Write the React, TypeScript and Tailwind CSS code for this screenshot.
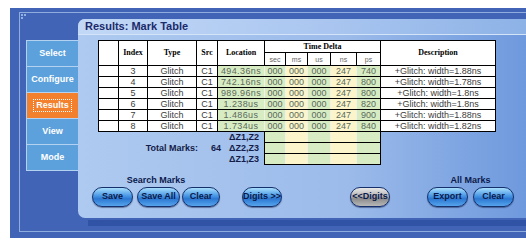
import React from 'react'

const rows = [
  { idx: 3, loc: '494.36ns', ns: '247', ps: '740', desc: '+Glitch: width=1.88ns' },
  { idx: 4, loc: '742.16ns', ns: '247', ps: '800', desc: '+Glitch: width=1.78ns' },
  { idx: 5, loc: '989.96ns', ns: '247', ps: '800', desc: '+Glitch: width=1.8ns' },
  { idx: 6, loc: '1.238us', ns: '247', ps: '820', desc: '+Glitch: width=1.8ns' },
  { idx: 7, loc: '1.486us', ns: '247', ps: '900', desc: '+Glitch: width=1.88ns' },
  { idx: 8, loc: '1.734us', ns: '247', ps: '840', desc: '+Glitch: width=1.82ns' },
]

const timeBg = ['bg-[#d8ecc4]', 'bg-[#fcf5cc]', 'bg-[#d8ecc4]', 'bg-[#fcf5cc]', 'bg-[#d8ecc4]']
const timeEdge = [
  'border-l-black border-r-[#f2f2e4]',
  'border-x-[#f2f2e4]',
  'border-x-[#f2f2e4]',
  'border-x-[#f2f2e4]',
  'border-l-[#f2f2e4] border-r-black',
]

const PillButton = ({ label, w, gray }: { label: string; w: string; gray?: boolean }) => (
  <div
    className={`h-[20px] ${w} rounded-full border border-[#16306c] flex items-center justify-center text-[9px] font-bold text-[#0b1a4c] shadow-[0_1px_1px_rgba(10,20,60,0.45)] ${
      gray
        ? 'bg-[linear-gradient(to_bottom,#e8e8e8_0%,#b4b4b4_45%,#8c8c8c_60%,#b8b8b8_100%)]'
        : 'bg-[linear-gradient(to_bottom,#a8defc_0%,#4c9ae6_42%,#2c78d2_60%,#55a4ec_100%)]'
    }`}
  >
    {label}
  </div>
)

const App = () => {
  return (
    <div className="w-[526px] h-[244px] bg-white pt-[8px] pl-[10px] font-['Liberation_Sans',Arial,sans-serif]">
      <div className="w-[516px] h-[230px] bg-[#4164b6] pt-[4px] pl-[9px]">
        <div className="relative h-[220px] border-l border-t border-b border-[#8eacde] flex pt-[6px]">
          {/* grip */}
          <div className="absolute left-[1px] top-[1px] w-[6px] h-[6px]">
            <div className="absolute left-0 top-0 w-[2px] h-[2px] bg-[#90b0e2]" />
            <div className="absolute left-[3px] top-0 w-[2px] h-[2px] bg-[#90b0e2]" />
            <div className="absolute left-0 top-[3px] w-[2px] h-[2px] bg-[#90b0e2]" />
          </div>

          {/* side menu */}
          <div className="w-[58px] shrink-0 pt-[21px] pl-[6px]">
            <div className="w-[52px] border-t border-l border-[#b3d1f1]">
              {['Select', 'Configure', 'Results', 'View', 'Mode'].map((m) => (
                <div
                  key={m}
                  className={`h-[26px] border-b border-[#b3d1f1] flex items-center justify-center text-[9px] font-bold text-white ${
                    m === 'Results' ? 'bg-[#f2802c]' : 'bg-[#5ca1dc]'
                  }`}
                >
                  {m === 'Results' ? (
                    <span className="border border-dotted border-white px-[2px] leading-[11px]">Results</span>
                  ) : (
                    m
                  )}
                </div>
              ))}
            </div>
          </div>

          {/* main panel */}
          <div className="flex-1 flex flex-col">
            <div className="h-[199px] rounded-l-[7px] overflow-hidden bg-[linear-gradient(to_right,#aecaf0_0%,#9cbbea_60%,#6e99dd_100%)] flex flex-col">
              <div className="h-[16px] border-b border-[#d4e4f8] bg-[linear-gradient(to_right,#c2d8f6_0%,#aac6f0_55%,#8db2e6_100%)] pl-[7px] text-[11px] leading-[15px] font-bold text-[#1b2a6b]">
                Results: Mark Table
              </div>

              <div className="pt-[5px] pl-[20px]">
                <table className="border-collapse table-fixed w-[397px] text-[9px] leading-none text-[#3c3c3c]">
                  <colgroup>
                    <col className="w-[20px]" />
                    <col className="w-[29px]" />
                    <col className="w-[49px]" />
                    <col className="w-[21px]" />
                    <col className="w-[47px]" />
                    <col className="w-[21px]" />
                    <col className="w-[22px]" />
                    <col className="w-[23px]" />
                    <col className="w-[26px]" />
                    <col className="w-[24px]" />
                    <col className="w-[115px]" />
                  </colgroup>
                  <thead className="font-['Liberation_Serif',serif] font-bold text-[8px] text-black">
                    <tr>
                      <th rowSpan={2} className="border border-black bg-white p-0" />
                      <th rowSpan={2} className="border border-black bg-white p-0">Index</th>
                      <th rowSpan={2} className="border border-black bg-white p-0">Type</th>
                      <th rowSpan={2} className="border border-black bg-white p-0">Src</th>
                      <th rowSpan={2} className="border border-black bg-white p-0">Location</th>
                      <th colSpan={5} className="h-[12px] border border-black bg-white p-0">Time Delta</th>
                      <th rowSpan={2} className="border border-black bg-white p-0">Description</th>
                    </tr>
                    <tr>
                      {['sec', 'ms', 'us', 'ns', 'ps'].map((t) => (
                        <th
                          key={t}
                          className="h-[13px] border border-black bg-white p-0 font-['Liberation_Sans',sans-serif] font-normal text-[7px] text-[#666]"
                        >
                          {t}
                        </th>
                      ))}
                    </tr>
                  </thead>
                  <tbody>
                    {rows.map((r) => (
                      <tr key={r.idx}>
                        <td className="h-[11px] border border-black bg-white p-0" />
                        <td className="border border-black bg-white p-0 text-center">{r.idx}</td>
                        <td className="border border-black bg-white p-0 text-center">Glitch</td>
                        <td className="border border-black bg-white p-0 text-center">C1</td>
                        <td className="border border-black border-r-[#f2f2e4] bg-[#d8ecc4] p-0 text-center text-[#5a6a5a] tracking-[0.4px]">
                          {r.loc}
                        </td>
                        {['000', '000', '000', r.ns, r.ps].map((v, i) => (
                          <td
                            key={i}
                            className={`border border-y-black ${timeEdge[i]} ${timeBg[i]} p-0 text-center text-[#5a6a5a]`}
                          >
                            {v}
                          </td>
                        ))}
                        <td className="border border-black bg-white p-0 text-center">{r.desc}</td>
                      </tr>
                    ))}
                    {['ΔZ1,Z2', 'ΔZ2,Z3', 'ΔZ1,Z3'].map((z, zi) => (
                      <tr key={z}>
                        <td colSpan={5} className="h-[11px] p-0 border-0">
                          <div className="flex justify-end items-center pr-[5px] font-bold text-[9px] text-[#141c48]">
                            {zi === 1 && (
                              <>
                                <span>Total Marks:</span>
                                <span className="ml-[13px] mr-[8px]">64</span>
                              </>
                            )}
                            <span>{z}</span>
                          </div>
                        </td>
                        {timeBg.map((bg, i) => (
                          <td key={i} className={`border border-y-black ${timeEdge[i]} ${bg} p-0`} />
                        ))}
                        <td className="p-0 border-0" />
                      </tr>
                    ))}
                  </tbody>
                </table>
              </div>

              {/* button bar */}
              <div className="mt-[10px] pl-[14px] flex items-end">
                <div className="flex flex-col items-center">
                  <div className="text-[9px] font-bold text-[#0b1a4c] leading-[11px] mb-[1px]">Search Marks</div>
                  <div className="flex">
                    <PillButton label="Save" w="w-[41px]" />
                    <div className="ml-[4px]">
                      <PillButton label="Save All" w="w-[43px]" />
                    </div>
                    <div className="ml-[2px]">
                      <PillButton label="Clear" w="w-[38px]" />
                    </div>
                  </div>
                </div>
                <div className="ml-[22px]">
                  <PillButton label="Digits >>" w="w-[40px]" />
                </div>
                <div className="ml-[68px]">
                  <PillButton label="<<Digits" w="w-[40px]" gray />
                </div>
                <div className="ml-[37px] flex flex-col items-center">
                  <div className="text-[9px] font-bold text-[#0b1a4c] leading-[11px] mb-[1px]">All Marks</div>
                  <div className="flex">
                    <PillButton label="Export" w="w-[41px]" />
                    <div className="ml-[5px]">
                      <PillButton label="Clear" w="w-[41px]" />
                    </div>
                  </div>
                </div>
              </div>
            </div>
            <div className="mt-[2px] ml-[10px] h-[6px] bg-[#3153a6]" />
          </div>
        </div>
      </div>
    </div>
  )
}

export default App
